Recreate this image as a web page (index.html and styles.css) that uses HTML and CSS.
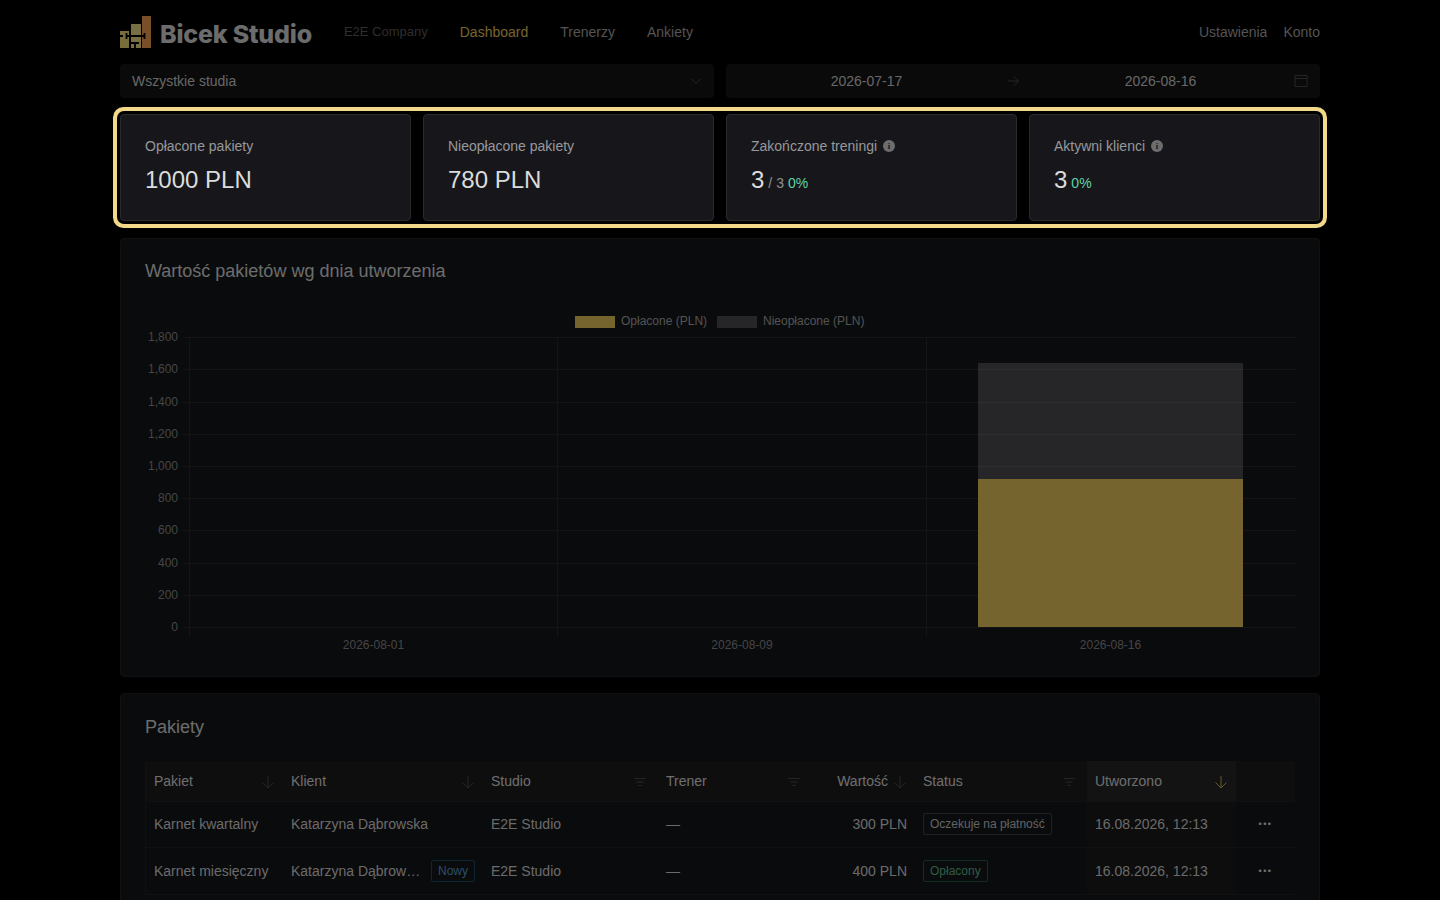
FILE: index.html
```html
<!DOCTYPE html>
<html lang="pl">
  <head>
    <meta charset="UTF-8" />
    <meta name="viewport" content="width=device-width, initial-scale=1.0" />
    <title>Bicek Studio</title>
    <link rel="stylesheet" href="styles.css">
  </head>
  <body>
    <div class="page">
      <header class="topbar">
        <a class="logo" href="#">
          <svg class="logo_icon" width="31" height="32" viewBox="0 0 31 32">
            <rect x="0" y="15" width="9" height="17" fill="#f0dc78" />
            <rect x="11" y="8" width="10" height="24" fill="#f2de88" />
            <rect x="22" y="0" width="9" height="32" fill="#f09e50" />
            <path d="M6.500 17v6M13.500 20H19M24.500 17v6M6.500 20H24.500M3 20H0M11 27h8M15 27v5" fill="none" stroke="#000" stroke-width="1.800" />
          </svg>
          <span class="logo_text">Bicek Studio</span>
        </a>
        <span class="company">E2E Company</span>
        <nav class="main_nav">
          <a class="active" href="#">Dashboard</a>
          <a href="#">Trenerzy</a>
          <a href="#">Ankiety</a>
        </nav>
        <nav class="user_nav">
          <a href="#">Ustawienia</a>
          <a href="#">Konto</a>
        </nav>
      </header>

      <div class="filters">
        <div class="select_box">
          <span>Wszystkie studia</span>
          <svg width="12" height="12" viewBox="0 0 12 12" fill="none" stroke="currentColor"><path d="M1.500 4 6 8.500 10.500 4" /></svg>
        </div>
        <div class="range_box">
          <span class="range_date">2026-07-17</span>
          <svg class="arrow" width="14" height="14" viewBox="0 0 14 14" fill="none" stroke="currentColor"><path d="M1.500 7h11M8 2.500 12.500 7 8 11.500" /></svg>
          <span class="range_date">2026-08-16</span>
          <svg class="cal" width="14" height="14" viewBox="0 0 14 14" fill="none" stroke="currentColor"><path d="M1 1.500h12v11H1ZM1 4.500h12" /></svg>
        </div>
      </div>

      <section class="stats">
        <div class="stat_card">
          <div class="stat_title">Opłacone pakiety</div>
          <div class="stat_value">1000 PLN</div>
        </div>
        <div class="stat_card">
          <div class="stat_title">Nieopłacone pakiety</div>
          <div class="stat_value">780 PLN</div>
        </div>
        <div class="stat_card">
          <div class="stat_title">Zakończone treningi <i class="info">i</i></div>
          <div class="stat_value">3<small>/ 3</small><em>0%</em></div>
        </div>
        <div class="stat_card">
          <div class="stat_title">Aktywni klienci <i class="info">i</i></div>
          <div class="stat_value">3<em>0%</em></div>
        </div>
      </section>

      <section class="card chart_card">
        <h2>Wartość pakietów wg dnia utworzenia</h2>
        <svg class="chart" width="1200" height="392" viewBox="0 0 1200 392">
          <g class="legend">
            <rect class="bar_paid" x="455" y="33" width="40" height="12" />
            <text x="501" y="42">Opłacone (PLN)</text>
            <rect class="bar_unpaid" x="597" y="33" width="40" height="12" />
            <text x="643" y="42">Nieopłacone (PLN)</text>
          </g>
          <g class="grid">
            <path d="M63 54.500H1176M63 86.500H1176M63 119.500H1176M63 151.500H1176M63 183.500H1176M63 215.500H1176M63 247.500H1176M63 280.500H1176M63 312.500H1176M63 344.500H1176" />
            <path d="M69.500 54V354M437.500 54V354M806.500 54V354" />
          </g>
          <rect class="bar_unpaid" x="858" y="80" width="265" height="116" />
          <rect class="bar_paid" x="858" y="196" width="265" height="148" />
          <g class="y_axis">
            <text x="58" y="58">1,800</text>
            <text x="58" y="90">1,600</text>
            <text x="58" y="123">1,400</text>
            <text x="58" y="155">1,200</text>
            <text x="58" y="187">1,000</text>
            <text x="58" y="219">800</text>
            <text x="58" y="251">600</text>
            <text x="58" y="284">400</text>
            <text x="58" y="316">200</text>
            <text x="58" y="348">0</text>
          </g>
          <g class="x_axis">
            <text x="253.500" y="366">2026-08-01</text>
            <text x="622" y="366">2026-08-09</text>
            <text x="990.500" y="366">2026-08-16</text>
          </g>
        </svg>
      </section>

      <section class="card table_card">
        <h2>Pakiety</h2>
        <table class="data_table">
          <colgroup>
            <col class="c_pakiet" /><col class="c_klient" /><col class="c_studio" /><col class="c_trener" /><col class="c_value" /><col class="c_status" /><col class="c_date" /><col class="c_more" />
          </colgroup>
          <thead>
            <tr>
              <th><div class="th_in">Pakiet <svg class="ic" width="14" height="14" viewBox="0 0 14 14"><path d="M7 1v12M1.500 7.500 7 13 12.500 7.500" /></svg></div></th>
              <th><div class="th_in">Klient <svg class="ic" width="14" height="14" viewBox="0 0 14 14"><path d="M7 1v12M1.500 7.500 7 13 12.500 7.500" /></svg></div></th>
              <th><div class="th_in">Studio <svg class="ic ic_filter" width="14" height="14" viewBox="0 0 14 14"><path d="M1.500 3.500h11M3.500 7h7M5.500 10.500h3" /></svg></div></th>
              <th><div class="th_in">Trener <svg class="ic ic_filter" width="14" height="14" viewBox="0 0 14 14"><path d="M1.500 3.500h11M3.500 7h7M5.500 10.500h3" /></svg></div></th>
              <th class="right"><div class="th_in th_end">Wartość <svg class="ic" width="14" height="14" viewBox="0 0 14 14"><path d="M7 1v12M1.500 7.500 7 13 12.500 7.500" /></svg></div></th>
              <th><div class="th_in">Status <svg class="ic ic_filter" width="14" height="14" viewBox="0 0 14 14"><path d="M1.500 3.500h11M3.500 7h7M5.500 10.500h3" /></svg></div></th>
              <th class="sorted"><div class="th_in">Utworzono <svg class="ic ic_on" width="14" height="14" viewBox="0 0 14 14"><path d="M7 1v12M1.500 7.500 7 13 12.500 7.500" /></svg></div></th>
              <th></th>
            </tr>
          </thead>
          <tbody>
            <tr class="row_first">
              <td>Karnet kwartalny</td>
              <td>Katarzyna Dąbrowska</td>
              <td>E2E Studio</td>
              <td>—</td>
              <td class="right">300 PLN</td>
              <td><span class="tag">Oczekuje na płatność</span></td>
              <td class="sorted">16.08.2026, 12:13</td>
              <td class="more">•••</td>
            </tr>
            <tr>
              <td>Karnet miesięczny</td>
              <td><div class="client"><span class="client_name">Katarzyna Dąbrowska</span><span class="tag tag_new">Nowy</span></div></td>
              <td>E2E Studio</td>
              <td>—</td>
              <td class="right">400 PLN</td>
              <td><span class="tag tag_paid">Opłacony</span></td>
              <td class="sorted">16.08.2026, 12:13</td>
              <td class="more">•••</td>
            </tr>
          </tbody>
        </table>
      </section>
    </div>
  </body>
</html>
```

FILE: styles.css
```css
* {
  margin: 0;
  padding: 0;
  box-sizing: border-box;
}
html,
body {
  height: 100%;
  overflow: hidden;
  background: #000;
}
body {
  font-family: "Liberation Sans", Arial, sans-serif;
  font-size: 14px;
  color: #d9d9d9;
}
a {
  color: inherit;
  text-decoration: none;
}
.page {
  width: 1200px;
  margin: 0 auto;
}

/* top */
.topbar {
  display: flex;
  align-items: center;
  height: 64px;
  color: #a6a6a6;
}
.logo {
  display: flex;
  align-items: center;
  gap: 9px;
  margin-right: 32px;
}
.logo_icon {
  display: block;
}
.logo_text {
  font-family: "Inter", sans-serif;
  font-size: 25px;
  font-weight: 800;
  letter-spacing: -0.2px;
  margin-top: 3px;
  color: #d9d9d9;
}
.company {
  font-size: 13px;
  color: #5c5c5c;
  margin: -1px 32px 0 0;
}
.main_nav {
  display: flex;
  gap: 32px;
}
.main_nav .active {
  color: #e8c75f;
}
.user_nav {
  display: flex;
  gap: 16px;
  margin-left: auto;
}

/* filtry */
.filters {
  display: grid;
  grid-template-columns: 594px 594px;
  gap: 12px;
  height: 34px;
}
.select_box,
.range_box {
  display: flex;
  align-items: center;
  background: #141414;
  border-radius: 4px;
  padding: 0 12px;
  color: #cfcfcf;
}
.select_box {
  justify-content: space-between;
}
.select_box svg,
.range_box svg {
  color: #4a4a4a;
  flex: none;
}
.range_box {
  gap: 12px;
  text-align: center;
}
.range_date {
  flex: 1;
}
.range_box .arrow {
  margin-left: -1px;
}
.range_box .cal {
  margin-left: -7px;
}

/* spotlight */
.stats {
  position: relative;
  z-index: 5;
  display: grid;
  grid-template-columns: repeat(4, 1fr);
  gap: 12px;
  margin-top: 16px;
  background: #000;
  border-radius: 4px;
  box-shadow: 0 0 0 3px #000, 0 0 0 7px #f2d98a, 0 0 0 9999px rgba(0, 0, 0, 0.5);
}
.stat_card {
  height: 107px;
  padding: 23px 24px;
  background: #17171b;
  border: 1px solid #2a2a2d;
  border-radius: 4px;
}
.stat_title {
  display: flex;
  align-items: center;
  gap: 6px;
  line-height: 16px;
  color: #98989b;
}
.info {
  display: block;
  width: 12px;
  height: 12px;
  border-radius: 50%;
  background: #6d6d70;
  color: #17181c;
  font: bold 9px/12px "Liberation Serif", serif;
  text-align: center;
}
.stat_value {
  display: flex;
  align-items: baseline;
  margin-top: 10px;
  font-size: 24px;
  line-height: 32px;
  color: #dcdcdc;
}
.stat_value small {
  font-size: 14px;
  color: #8f8f91;
  margin-left: 4px;
}
.stat_value em {
  font-style: normal;
  font-size: 14px;
  color: #5fd3a6;
  margin-left: 4px;
}

/* karty */
.card {
  position: relative;
  margin-top: 16px;
  background: #14161a;
  border: 1px solid #222;
  border-radius: 4px;
}
.card h2 {
  font-size: 18px;
  font-weight: 400;
  line-height: 24px;
  padding: 20px 24px 0;
  color: #d9d9d9;
}
.chart_card {
  height: 439px;
  margin-top: 17px;
}
.chart {
  display: block;
  margin: 0 0 0 -1px;
  font-size: 12px;
}
.legend text {
  fill: #a6a6a6;
}
.bar_paid {
  fill: #eac95a;
}
.bar_unpaid {
  fill: rgba(255, 255, 255, 0.24);
}
.grid path {
  fill: none;
  stroke: #2b2b2b;
  stroke-width: 1;
}
.y_axis text {
  fill: #8a8a8a;
  text-anchor: end;
}
.x_axis text {
  fill: #8a8a8a;
  text-anchor: middle;
}

/* tabela */
.table_card {
  min-height: 320px;
}
.table_card h2 {
  padding-top: 21px;
}
.data_table {
  width: 1150px;
  margin: 22px 24px 0;
  border-collapse: collapse;
  table-layout: fixed;
  color: #d4d4d4;
}
.c_pakiet { width: 138px; }
.c_klient { width: 200px; }
.c_studio { width: 175px; }
.c_trener { width: 154px; }
.c_value { width: 103px; }
.c_status { width: 172px; }
.c_date { width: 149px; }
.c_more { width: 59px; }
.data_table th {
  height: 40px;
  padding: 0 8px;
  background: #1d1d1f;
  font-weight: 400;
  text-align: left;
  color: #dcdcdc;
  border-bottom: 1px solid #222;
}
.data_table th:first-child,
.data_table td:first-child {
  padding-left: 9px;
  box-shadow: inset 1px 0 #222;
}
.th_in {
  display: flex;
  align-items: center;
  justify-content: space-between;
}
.th_end {
  justify-content: flex-end;
  gap: 5px;
}
.ic {
  fill: none;
  stroke: #4c4c4c;
  flex: none;
  margin-top: 2px;
}
.ic_filter {
  margin-right: 3px;
}
.ic_on {
  stroke: #c9b44c;
}
.data_table td {
  height: 47px;
  padding: 0 8px;
  border-bottom: 1px solid #222;
  white-space: nowrap;
}
.row_first td {
  height: 46px;
}
.data_table th.sorted {
  background: #262626;
}
.data_table td.sorted {
  background: #1a1a1a;
}
.right {
  text-align: right;
}
.data_table th.right {
  text-align: right;
}
.more {
  text-align: center;
  font-size: 9px;
  letter-spacing: 1.5px;
  color: #e0e0e0;
}
.tag {
  display: inline-block;
  height: 22px;
  padding: 0 6px;
  font-size: 12px;
  line-height: 20px;
  border: 1px solid #424242;
  border-radius: 2px;
  color: #c4c4c4;
}
.tag_new {
  flex: none;
  margin-left: 8px;
  color: #5f9bc9;
  border-color: #1c4a6b;
}
.tag_paid {
  color: #5fb88a;
  border-color: #235c3e;
}
.client {
  display: flex;
  align-items: center;
}
.client_name {
  min-width: 0;
  overflow: hidden;
  text-overflow: ellipsis;
}
```
